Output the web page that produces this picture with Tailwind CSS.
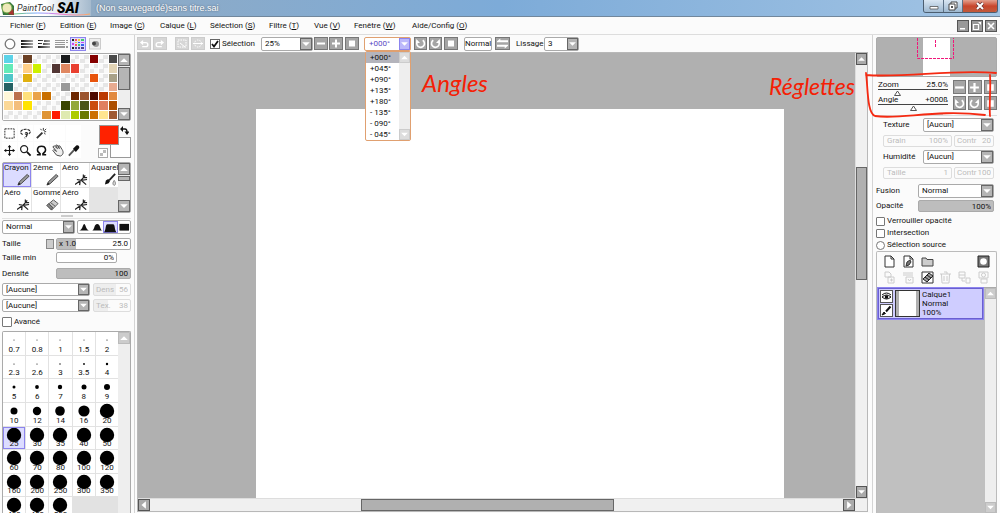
<!DOCTYPE html>
<html lang="fr">
<head>
<meta charset="utf-8">
<title>PaintTool SAI</title>
<script src="https://cdn.jsdelivr.net/npm/@tailwindcss/browser@4"></script>
</head>
<body class="h-screen overflow-hidden flex flex-col bg-[#fbfbfb] text-[#111] text-[8px] leading-[10px] font-['Roboto','Liberation_Sans',sans-serif]">
<svg class="hidden">
  <symbol id="up" viewBox="0 0 8 8"><path d="M1 5.500h6L4 2.500z" fill="#fff"/></symbol>
  <symbol id="down" viewBox="0 0 8 8"><path d="M1 2.500h6L4 5.500z" fill="#fff"/></symbol>
  <symbol id="left" viewBox="0 0 8 8"><path d="M5.500 1v6L2 4z" fill="#fff"/></symbol>
  <symbol id="right" viewBox="0 0 8 8"><path d="M2.500 1v6L6 4z" fill="#fff"/></symbol>
  <symbol id="minus" viewBox="0 0 10 10"><path d="M1 4h8v2H1z" fill="#fff"/></symbol>
  <symbol id="plus" viewBox="0 0 10 10"><path d="M1 4h3V1h2v3h3v2H6v3H4V6H1z" fill="#fff"/></symbol>
  <symbol id="square" viewBox="0 0 10 10"><path d="M2 2h6v6H2z" fill="#fff"/></symbol>
  <symbol id="ccw" viewBox="0 0 10 10"><path d="M2.600 2.600A3.500 3.500 0 1 0 7 2.100" fill="none" stroke="#fff" stroke-width="1.500"/><path d="M1 1v3.600h3.600z" fill="#fff"/></symbol>
  <symbol id="cw" viewBox="0 0 10 10"><path d="M7.400 2.600A3.500 3.500 0 1 1 3 2.100" fill="none" stroke="#fff" stroke-width="1.500"/><path d="M9 1v3.600H5.400z" fill="#fff"/></symbol>
  <symbol id="swap" viewBox="0 0 10 10"><path d="M0 3l3-2.500V2h7v1.800H0zM10 7L7 9.500V8H0V6.200h10z" fill="#fff"/></symbol>
  <symbol id="undo" viewBox="0 0 10 10"><path d="M3 4h4a2 2 0 0 1 0 4.500H3" fill="none" stroke="#fff" stroke-width="1.500"/><path d="M.5 4L4 1v6z" fill="#fff"/></symbol>
  <symbol id="redo" viewBox="0 0 10 10"><path d="M7 4H3a2 2 0 0 0 0 4.500H7" fill="none" stroke="#fff" stroke-width="1.500"/><path d="M9.500 4L6 1v6z" fill="#fff"/></symbol>
  <symbol id="pencil" viewBox="0 0 14 14"><path d="M1 13l1.500-3.500L11 1.500l2 2L4.500 11.500z" fill="#999" stroke="#444"/><path d="M1 13l3-1-1.800-1.800z" fill="#222"/></symbol>
  <symbol id="air" viewBox="0 0 14 14"><path d="M0 12.500l6-4.500M2 7l4.500 1L11 2.500M6.500 8L13 7M7 8l5 4.500M5.500 9L5 13M9 5V1.500M9 5h4" fill="none" stroke="#222" stroke-width="1.300"/></symbol>
  <symbol id="brush" viewBox="0 0 14 14"><path d="M1 12.500l1-4.500 2.500-1.500 2 2-1.500 2.500z" fill="#111"/><path d="M5.500 8L12 1" stroke="#222" stroke-width="2"/><path d="M11 8c3 4 0 5.500 0 5.500s-3-1.500 0-5.500z" fill="#ddd" stroke="#777"/></symbol>
  <symbol id="eraser" viewBox="0 0 14 14"><path d="M1 8l7-6 5 4-7 7z" fill="#ccc" stroke="#555"/><path d="M3 6.500l5 4.500M5 5l5 4M1 8l5 5 1-3-4-4z" fill="#888" stroke="#555"/></symbol>
</svg>

<header class="h-[17px] shrink-0 flex items-stretch border-b border-[#71879c] bg-linear-to-r from-[#93aabf] via-[#7dabd8] to-[#a2c4e4]">
  <div class="w-[91px] flex items-center relative bg-linear-to-r from-white via-white to-[#a5bacd]">
    <svg class="w-[15px] h-[15px] shrink-0" viewBox="0 0 15 15"><path d="M1 3l9-2 4 4v9H3z" fill="#35763b"/><circle cx="7" cy="7" r="5" fill="#eee9b9" stroke="#71a543"/><path d="M8 13l5-5 1 6z" fill="#a8322f"/></svg>
    <span class="text-[9px] italic ml-[2px] text-[#333] whitespace-nowrap">PaintTool</span>
    <span class="text-[14px] leading-[14px] font-black italic ml-[3px] text-black">SAI</span>
    <svg class="absolute left-[14px] bottom-0 w-[76px] h-[5px]" viewBox="0 0 76 5"><defs><linearGradient id="rainbow"><stop stop-color="#6dc86d"/><stop offset=".3" stop-color="#79a5ff"/><stop offset=".6" stop-color="#ec72dc"/><stop offset="1" stop-color="#ffac62"/></linearGradient></defs><path d="M0 3Q25 1 45 3T76 3" fill="none" stroke="url(#rainbow)"/></svg>
  </div>
  <h1 class="text-[9px] leading-[17px] ml-[5px] text-white flex-1 font-['Liberation_Sans',sans-serif] [text-shadow:0_0_2px_#456]">(Non sauvegardé)sans titre.sai</h1>
  <div class="flex h-[13px] mr-[2px] border border-t-0 border-[#4c5e70] rounded-b-[3px] overflow-hidden">
    <button aria-label="Réduire" class="w-[20px] bg-linear-to-b from-[#d9e6f2] to-[#9db8d0] border-r border-[#5c7186] flex justify-center items-center"><svg class="w-[10px] h-[10px]" viewBox="0 0 10 10"><path d="M1 5.500h8v2.500H1z" fill="#fff" stroke="#555" stroke-width=".8"/></svg></button>
    <button aria-label="Restaurer" class="w-[19px] bg-linear-to-b from-[#d9e6f2] to-[#9db8d0] border-r border-[#5c7186] flex justify-center items-center"><svg class="w-[10px] h-[10px]" viewBox="0 0 10 10"><path d="M3 1h6v6H3z" fill="#fff" stroke="#444"/><path d="M1 3h6v6H1z" fill="#fff" stroke="#444"/><path d="M3 5h2v2H3z" fill="#555"/></svg></button>
    <button aria-label="Fermer" class="w-[34px] bg-linear-to-b from-[#e2a08f] via-[#c8452c] to-[#c25a3c] flex justify-center items-center"><svg class="w-[10px] h-[10px]" viewBox="0 0 10 10"><path d="M2 2l6 6M8 2l-6 6" stroke="#633" stroke-width="3.200"/><path d="M2 2l6 6M8 2l-6 6" stroke="#fff" stroke-width="2"/></svg></button>
  </div>
</header>

<nav class="h-[18px] shrink-0 flex items-center pl-[10px] pr-[3px] border-b border-[#ddd] whitespace-nowrap">
  <a href="#" class="w-[50px]">Fichier (<u>F</u>)</a><a href="#" class="w-[50px]">Edition (<u>E</u>)</a><a href="#" class="w-[50px]">Image (<u>C</u>)</a><a href="#" class="w-[50px]">Calque (<u>L</u>)</a><a href="#" class="w-[59px]">Sélection (<u>S</u>)</a><a href="#" class="w-[45px]">Filtre (<u>T</u>)</a><a href="#" class="w-[40px]">Vue (<u>V</u>)</a><a href="#" class="w-[58px]">Fenêtre (<u>W</u>)</a><a href="#">Aide/Config (<u>O</u>)</a>
  <span class="flex-1"></span>
  <div class="flex gap-[2px]">
    <button aria-label="Réduire le document" class="w-[12px] h-[12px] border border-[#555] bg-[#999]"><svg viewBox="0 0 10 10"><path d="M2 7h5v1.500H2z" fill="#fff"/></svg></button>
    <button aria-label="Agrandir le document" class="w-[12px] h-[12px] border border-[#555] bg-[#999]"><svg viewBox="0 0 10 10"><path d="M1.500 3.500h5v5h-5z" fill="none" stroke="#fff" stroke-width="1.200"/><path d="M6 1h3v3z" fill="#fff"/></svg></button>
    <button aria-label="Fermer le document" class="w-[12px] h-[12px] border border-[#555] bg-[#999]"><svg viewBox="0 0 10 10"><path d="M2 2l6 6M8 2l-6 6" stroke="#fff" stroke-width="1.600"/></svg></button>
  </div>
</nav>

<div class="flex-1 min-h-0 flex">
  <!-- Left panels -->
  <aside class="w-[135px] shrink-0 pl-[2px] pr-[3px] border-r border-[#d4d4d4] flex flex-col">
    <div class="h-[18px] shrink-0 flex items-center gap-[1px]">
      <button aria-label="Roue" class="w-[16px] h-[14px] flex items-center justify-center"><svg class="w-[12px] h-[12px]" viewBox="0 0 12 12"><circle cx="6" cy="6" r="4.800" fill="#fff" stroke="#777" stroke-width="1.300"/></svg></button>
      <button aria-label="RVB" class="w-[16px] h-[14px] flex items-center justify-center"><svg class="w-[12px] h-[12px]" viewBox="0 0 12 12"><defs><linearGradient id="g"><stop stop-color="#111"/><stop offset="1" stop-color="#aaa"/></linearGradient></defs><path d="M0 2h12v2H0zM0 5h12v2H0zM0 8h12v2H0z" fill="url(#g)"/></svg></button>
      <button aria-label="TSV" class="w-[16px] h-[14px] flex items-center justify-center"><svg class="w-[12px] h-[12px]" viewBox="0 0 12 12"><path d="M0 2h5v1H0zM6 2h6v2H6zM0 5h4v1H0zM5 5h7v2H5zM0 8h12v2H0z" fill="url(#g)"/></svg></button>
      <button aria-label="Intermédiaires" class="w-[16px] h-[14px] flex items-center justify-center"><svg class="w-[13px] h-[12px]" viewBox="0 0 13 12"><path d="M0 2h10v1H0zM11 2h2v1h-2zM0 4h10v1H0zM11 4h2v1h-2zM0 6h10v1H0zM0 8h10v2H0zM11 8h2v2h-2z" fill="#999"/></svg></button>
      <button aria-label="Nuancier" class="w-[16px] h-[14px] border border-[#8c84ee] bg-[#dcdcff] flex items-center justify-center"><svg class="w-[12px] h-[12px]" viewBox="0 0 12 12"><path d="M0 1h2v2H0zM0 9h2v2H0z" fill="#222"/><path d="M3 1h2v2H3zM3 6h2v2H3z" fill="#f55"/><path d="M6 1h2v2H6zM3 4h2v1H3z" fill="#ec3"/><path d="M9 1h3v2H9zM6 6h2v2H6z" fill="#4c6"/><path d="M6 4h2v1H6zM9 6h3v2H9z" fill="#36e"/><path d="M9 4h3v1H9zM0 5h2v2H0z" fill="#c4e"/><path d="M3 9h2v2H3zM6 9h2v2H6zM9 9h3v2H9z" fill="#548"/></svg></button>
      <button aria-label="Bloc-notes" class="w-[16px] h-[14px] flex items-center justify-center"><svg class="w-[12px] h-[12px]" viewBox="0 0 12 12"><rect x=".5" y=".5" width="11" height="10.500" fill="#eee" stroke="#ccc"/><circle cx="7" cy="6" r="3" fill="#999"/><circle cx="5" cy="5.500" r="2" fill="#444"/></svg></button>
    </div>
    <div class="h-[68px] shrink-0 flex border border-[#aaa] rounded-[2px]">
      <div id="palette" class="flex-1 grid grid-cols-12 grid-rows-7 gap-px p-px bg-white"></div>
      <div class="w-[12px] bg-[#eee] flex flex-col">
        <button aria-label="Haut" class="h-[12px] border border-[#666] bg-[#b5b5b5]"><svg class="w-[10px] h-[10px]"><use href="#up"/></svg></button>
        <span class="h-[23px] mt-px border border-[#666] bg-[#b5b5b5]"></span><span class="flex-1"></span>
        <button aria-label="Bas" class="h-[12px] border border-[#666] bg-[#b5b5b5]"><svg class="w-[10px] h-[10px]"><use href="#down"/></svg></button>
      </div>
    </div>
    <div class="h-[41px] shrink-0 flex justify-between pt-[4px]">
      <div class="grid grid-cols-5 gap-px h-[33px]">
        <button aria-label="Rectangle" class="w-[15px] h-[16px] bg-white p-px"><svg viewBox="0 0 14 14"><rect x="2" y="2" width="10" height="10" fill="none" stroke="#222" stroke-dasharray="2 1"/></svg></button>
        <button aria-label="Lasso" class="w-[15px] h-[16px] bg-white p-px"><svg viewBox="0 0 14 14"><path d="M4 8C-1 6 3 2 8 2.500s6 4.500 0 5.500c-2 0-2-2 0-2s1 4-2 6" fill="none" stroke="#222" stroke-width="1.200" stroke-dasharray="3 1"/></svg></button>
        <button aria-label="Baguette magique" class="w-[15px] h-[16px] bg-white p-px"><svg viewBox="0 0 14 14"><path d="M2 12l6-6" stroke="#333" stroke-width="2"/><path d="M9 1v3M12 5h-2M6 2l1 1.500M12 2l-2 2M11 8l-1-2" stroke="#333"/></svg></button>
        <span class="bg-white"></span><span class="bg-white"></span>
        <button aria-label="Déplacer" class="w-[15px] h-[16px] bg-white p-px"><svg viewBox="0 0 14 14"><path d="M7 2v10M2 7h10" stroke="#111" stroke-width="1.200"/><path d="M7 1L5 3.500h4zM7 13l-2-2.500h4zM1 7l2.500-2v4zM13 7l-2.500-2v4z" fill="#111"/></svg></button>
        <button aria-label="Zoom" class="w-[15px] h-[16px] bg-white p-px"><svg viewBox="0 0 14 14"><circle cx="5.500" cy="5.500" r="3.800" fill="none" stroke="#222" stroke-width="1.300"/><path d="M8.500 8.500l4 4" stroke="#111" stroke-width="2"/></svg></button>
        <button aria-label="Rotation" class="w-[15px] h-[16px] bg-white p-px"><svg viewBox="0 0 14 14"><path d="M2 11.500h3.500v-1C1 8 2 2.500 7 2.500s6 5.500 1.500 8v1H12" fill="none" stroke="#111" stroke-width="1.600"/></svg></button>
        <button aria-label="Main" class="w-[15px] h-[16px] bg-white p-px"><svg viewBox="0 0 14 14"><path d="M6 12L2 7l1-1 3 2-4-5 1.500-1L7 5 5 1.500 6.500 1 9 5l-1-3h1.500L12 6c2 3 1 6-2 7z" fill="#eee" stroke="#444"/></svg></button>
        <button aria-label="Pipette" class="w-[15px] h-[16px] bg-white p-px"><svg viewBox="0 0 14 14"><path d="M2 12.500L8 6" stroke="#555" stroke-width="2"/><path d="M6.500 5l3 3.500 1-1 2.500-3c1-2-1-4-3-3L7.500 4z" fill="#111"/></svg></button>
      </div>
      <div class="w-[33px] h-[33px] relative">
        <button aria-label="Couleur secondaire" class="absolute right-0 bottom-0 w-[21px] h-[21px] bg-white border border-[#999]"></button>
        <button aria-label="Couleur principale" class="absolute left-[1px] top-0 w-[20px] h-[20px] bg-[#ff2200] border border-[#999]"></button>
        <button aria-label="Transparence" class="absolute left-0 bottom-0 w-[10px] h-[10px] border border-[#aaa] bg-white"><svg viewBox="0 0 8 8"><path d="M1 4h3V1h3v3H4v3H1z" fill="#bbb"/></svg></button>
        <button aria-label="Échanger" class="absolute right-[2px] top-0 w-[9px] h-[10px]"><svg viewBox="0 0 9 9"><path d="M2 3h3q2 0 2 3" fill="none" stroke="#111" stroke-width="1.300"/><path d="M0 3l3-3v6zM7 9L4.500 5.500h5z" fill="#111"/></svg></button>
      </div>
    </div>
    <div class="h-[51px] shrink-0 flex border border-[#aaa] rounded-[2px]">
      <div id="tools" class="flex-1 grid grid-cols-4 grid-rows-2 gap-px bg-[#e4e4e4]"></div>
      <div class="w-[12px] bg-[#eee] flex flex-col">
        <button aria-label="Haut" class="h-[12px] border border-[#666] bg-[#b5b5b5]"><svg class="w-[10px] h-[10px]"><use href="#up"/></svg></button>
        <span class="h-[5px] mt-px border border-[#666] bg-[#b5b5b5]"></span><span class="flex-1"></span>
        <button aria-label="Bas" class="h-[12px] border border-[#666] bg-[#b5b5b5]"><svg class="w-[10px] h-[10px]"><use href="#down"/></svg></button>
      </div>
    </div>
    <div class="h-[6px] shrink-0 flex justify-center items-center border-b border-[#e2e2e2]"><span class="w-[12px] h-[2px] bg-[#ccc]"></span></div>
    <div class="h-[14px] mt-px shrink-0 flex justify-between">
      <div class="w-[73px] flex border border-[#aaa] rounded-[2px] bg-white"><select aria-label="Mode" class="appearance-none flex-1 min-w-0 pl-[3px]"><option>Normal</option></select><span class="w-[11px] border border-[#666] bg-[#b5b5b5]"><svg class="w-[9px] h-[10px]"><use href="#down"/></svg></span></div>
      <div class="w-[54px] flex border border-[#aaa] rounded-[2px] bg-white">
        <button aria-label="Pointe fine" class="flex-1"><svg viewBox="0 0 13 12"><path d="M1 10c4-1 4-7 5.500-7S8 9 12 10z" fill="#111"/></svg></button>
        <button aria-label="Pointe ronde" class="flex-1"><svg viewBox="0 0 13 12"><path d="M1 10c3-1 2-7 5.500-7S9 9 12 10z" fill="#111"/></svg></button>
        <button aria-label="Pointe large" class="flex-1 border border-[#8c84ee] bg-[#dcdcff]"><svg viewBox="0 0 11 10"><path d="M0 9c2-2 1-7 3-7h5c2 0 1 5 3 7z" fill="#111"/></svg></button>
        <button aria-label="Pointe carrée" class="flex-1"><svg viewBox="0 0 13 12"><path d="M1.500 3h10v7h-10z" fill="#111"/></svg></button>
      </div>
    </div>
    <div class="h-[14px] mt-[3px] shrink-0 flex items-center">
      <label for="size" class="w-[44px] shrink-0">Taille</label><button aria-label="Échelle" class="w-[8px] h-[10px] mr-[2px] shrink-0 border border-[#888] bg-[#ccc]"></button>
      <div class="flex-1 min-w-0 h-[12px] flex items-center border border-[#aaa] rounded-[2px] bg-white"><span class="bg-[#bdbdbd] w-[19px] shrink-0 h-full pl-[2px] whitespace-nowrap">x 1.0</span><input id="size" value="25.0" class="flex-1 min-w-0 text-right pr-[2px]"></div>
    </div>
    <div class="h-[13px] shrink-0 flex items-center">
      <label for="min" class="w-[54px]">Taille min</label><input id="min" value="0%" class="w-[61px] h-[11px] border border-[#aaa] rounded-[2px] bg-white text-right pr-[2px]">
    </div>
    <div class="h-[13px] mt-[3px] shrink-0 flex items-center">
      <label for="density" class="w-[54px]">Densité</label><input id="density" value="100" class="flex-1 min-w-0 h-[11px] border border-[#aaa] rounded-[2px] bg-[#bdbdbd] text-right pr-[2px]">
    </div>
    <div class="h-[13px] mt-[3px] shrink-0 flex gap-[3px]">
      <div class="w-[88px] flex border border-[#aaa] rounded-[2px] bg-white"><select aria-label="Forme" class="appearance-none flex-1 min-w-0 pl-[3px]"><option>[Aucune]</option></select><span class="w-[11px] border border-[#666] bg-[#b5b5b5]"><svg class="w-[9px] h-[9px]"><use href="#down"/></svg></span></div>
      <label class="flex-1 min-w-0 flex items-center border border-[#ddd] rounded-[2px] text-[#bbb] px-[2px] bg-linear-to-r from-[#eee] from-60% to-[#fbfbfb] to-60%">Dens<input disabled value="56" class="flex-1 min-w-0 text-right"></label>
    </div>
    <div class="h-[13px] mt-[3px] shrink-0 flex gap-[3px]">
      <div class="w-[88px] flex border border-[#aaa] rounded-[2px] bg-white"><select aria-label="Texture du pinceau" class="appearance-none flex-1 min-w-0 pl-[3px]"><option>[Aucune]</option></select><span class="w-[11px] border border-[#666] bg-[#b5b5b5]"><svg class="w-[9px] h-[9px]"><use href="#down"/></svg></span></div>
      <label class="flex-1 min-w-0 flex items-center border border-[#ddd] rounded-[2px] text-[#bbb] px-[2px] bg-linear-to-r from-[#eee] from-40% to-[#fbfbfb] to-40%">Tex.<input disabled value="38" class="flex-1 min-w-0 text-right"></label>
    </div>
    <label class="h-[12px] mt-[4px] shrink-0 flex items-center gap-[2px]"><input type="checkbox" class="appearance-none w-[10px] h-[10px] border border-[#777] rounded-[1px] bg-white">Avancé</label>
    <div class="flex-1 min-h-0 mt-[3px] flex border border-b-0 border-[#aaa] rounded-t-[2px] overflow-hidden">
      <div class="flex-1"><div id="brushes" class="grid grid-cols-5 grid-rows-8 h-[188px] gap-px bg-[#e2e2e2]"></div></div>
      <div class="w-[12px] bg-[#eee]"><button aria-label="Haut" class="w-[12px] h-[12px] border border-[#bbb] bg-[#ccc]"><svg class="w-[10px] h-[10px]"><use href="#up"/></svg></button></div>
    </div>
  </aside>

  <!-- Workspace -->
  <main class="flex-1 min-w-0 flex flex-col pl-[2px] pr-[4px] relative">
    <div class="h-[17px] shrink-0 flex items-center whitespace-nowrap">
      <button aria-label="Annuler" class="w-[14px] h-[13px] border border-[#ccc] bg-[#d6d6d6] p-px mr-[2px]"><svg class="w-[10px] h-[9px]"><use href="#undo"/></svg></button>
      <button aria-label="Rétablir" class="w-[14px] h-[13px] border border-[#ccc] bg-[#d6d6d6] p-px mr-[8px]"><svg class="w-[10px] h-[9px]"><use href="#redo"/></svg></button>
      <button aria-label="Désélectionner" class="w-[14px] h-[13px] border border-[#ccc] bg-[#d6d6d6] p-px mr-[2px]"><svg viewBox="0 0 10 9"><rect x="1" y="1" width="8" height="7" fill="none" stroke="#fff" stroke-dasharray="1.500 1"/><path d="M3 4l5 4" stroke="#fff"/></svg></button>
      <button aria-label="Inverser" class="w-[14px] h-[13px] border border-[#ccc] bg-[#d6d6d6] p-px mr-[5px]"><svg viewBox="0 0 10 9"><circle cx="5" cy="4.500" r="3.500" fill="none" stroke="#fff" stroke-dasharray="1.500 1"/><path d="M0 4.500h10" stroke="#fff"/></svg></button>
      <label class="w-[51px] flex items-center gap-[2px] relative"><input type="checkbox" checked class="appearance-none w-[10px] h-[10px] border border-[#666] bg-white"><svg class="absolute left-[1px] w-[8px] h-[8px]" viewBox="0 0 8 8"><path d="M1 4l2 2.500L7 1" fill="none" stroke="#111" stroke-width="1.800"/></svg>Sélection</label>
      <div class="w-[52px] h-[14px] mr-px flex border border-[#aaa] rounded-[2px] bg-white"><select aria-label="Zoom" class="appearance-none flex-1 min-w-0 pl-[3px]"><option>25%</option></select><span class="w-[12px] border border-[#666] bg-[#b5b5b5]"><svg class="w-[10px] h-[10px]"><use href="#down"/></svg></span></div>
      <button aria-label="Zoom arrière" class="w-[14px] h-[13px] border border-[#777] bg-[#a5a5a5] px-px mr-px"><svg class="w-[10px] h-[11px]"><use href="#minus"/></svg></button>
      <button aria-label="Zoom avant" class="w-[14px] h-[13px] border border-[#777] bg-[#a5a5a5] px-px mr-[2px]"><svg class="w-[10px] h-[11px]"><use href="#plus"/></svg></button>
      <button aria-label="Zoom normal" class="w-[14px] h-[13px] border border-[#777] bg-[#a5a5a5] px-px mr-[5px]"><svg class="w-[10px] h-[11px]"><use href="#square"/></svg></button>
      <div class="w-[47px] h-[14px] mr-[3px] relative flex border border-[#e0a070] rounded-[2px] bg-white text-[#5b4bc4]"><select aria-label="Angle" class="appearance-none flex-1 min-w-0 pl-[4px]"><option>+000°</option></select><span class="w-[11px] border border-[#8c84ee] bg-[#bcb8fa]"><svg class="w-[9px] h-[10px]"><use href="#down"/></svg></span>
        <div class="absolute left-0 top-[13px] w-[46px] z-10 flex bg-white border border-[#e0a070] rounded-[2px] text-[#111]">
          <ul role="listbox" aria-label="Angles" class="flex-1 leading-[11px]">
            <li role="option" aria-selected="true" class="pl-[4px] bg-[#b4b4bc]">+000°</li><li role="option" class="pl-[4px]">+045°</li><li role="option" class="pl-[4px]">+090°</li><li role="option" class="pl-[4px]">+135°</li><li role="option" class="pl-[4px]">+180°</li><li role="option" class="pl-[4px]">- 135°</li><li role="option" class="pl-[4px]">- 090°</li><li role="option" class="pl-[4px]">- 045°</li>
          </ul>
          <div class="w-[11px] bg-[#eee] flex flex-col justify-between"><button aria-label="Haut" class="h-[11px] border border-[#ccc] bg-[#ddd]"><svg class="w-[9px] h-[9px]"><use href="#up"/></svg></button><button aria-label="Bas" class="h-[11px] border border-[#ccc] bg-[#ddd]"><svg class="w-[9px] h-[9px]"><use href="#down"/></svg></button></div>
        </div>
      </div>
      <button aria-label="Rotation gauche" class="w-[13px] h-[13px] border border-[#777] bg-[#a5a5a5] mr-[2px]"><svg class="w-[11px] h-[11px]"><use href="#ccw"/></svg></button>
      <button aria-label="Rotation droite" class="w-[13px] h-[13px] border border-[#777] bg-[#a5a5a5] mr-[2px]"><svg class="w-[11px] h-[11px]"><use href="#cw"/></svg></button>
      <button aria-label="Angle nul" class="w-[14px] h-[13px] border border-[#777] bg-[#a5a5a5] px-px mr-[6px]"><svg class="w-[10px] h-[11px]"><use href="#square"/></svg></button>
      <button class="w-[28px] h-[14px] border border-[#aaa] rounded-[2px] bg-white mr-[3px]">Normal</button>
      <button aria-label="Miroir" class="w-[15px] h-[13px] border border-[#777] bg-[#a5a5a5] px-px mr-[6px]"><svg class="w-[11px] h-[11px]"><use href="#swap"/></svg></button>
      <label for="smooth" class="w-[28px]">Lissage</label>
      <div class="w-[35px] h-[14px] flex border border-[#aaa] rounded-[2px] bg-white"><select id="smooth" class="appearance-none flex-1 min-w-0 pl-[3px]"><option>3</option></select><span class="w-[11px] border border-[#666] bg-[#b5b5b5]"><svg class="w-[9px] h-[10px]"><use href="#down"/></svg></span></div>
    </div>
    <div class="flex-1 min-h-0 flex flex-col border border-[#b8b8b8] bg-[#f0f0f0] mb-px">
      <div class="flex-1 min-h-0 flex">
        <div class="flex-1 bg-[#b0b0b0] pl-[118px] pr-[71px] pt-[56px] flex"><div class="flex-1 bg-white"></div></div>
        <div class="w-[12px] border-l border-[#ddd] flex flex-col">
          <button aria-label="Haut" class="h-[12px] border border-[#555] bg-[#aaa]"><svg class="w-[9px] h-[10px]"><use href="#up"/></svg></button>
          <span class="flex-[102]"></span><span class="flex-[112] border border-[#666] bg-[#b0b0b0]"></span><span class="flex-[207]"></span>
          <button aria-label="Bas" class="h-[12px] border border-[#555] bg-[#aaa]"><svg class="w-[9px] h-[10px]"><use href="#down"/></svg></button>
        </div>
      </div>
      <div class="h-[13px] border-t border-[#ddd] flex pr-[12px]">
        <button aria-label="Gauche" class="w-[12px] border border-[#555] bg-[#aaa]"><svg class="w-[10px] h-[10px]"><use href="#left"/></svg></button>
        <span class="flex-[212]"></span><span class="flex-[251] border border-[#666] bg-[#b0b0b0]"></span><span class="flex-[230]"></span>
        <button aria-label="Droite" class="w-[12px] border border-[#555] bg-[#aaa]"><svg class="w-[10px] h-[10px]"><use href="#right"/></svg></button>
      </div>
    </div>
    <p class="absolute left-[287px] top-[35px] text-[24px] leading-[26px] italic text-[#f52005] font-['Lato',sans-serif]">Angles</p>
    <p class="absolute right-[17px] top-[37px] text-[23px] leading-[28px] italic text-[#f52005] font-['Lato',sans-serif]">Réglettes</p>
  </main>

  <!-- Right panels -->
  <aside class="w-[128px] shrink-0 border-l border-[#d4d4d4] pl-[3px] pr-[3px] pt-[2px] flex flex-col relative">
    <div class="h-[40px] shrink-0 border border-[#aaa] rounded-[2px] bg-[#b0b0b0] relative flex justify-center">
      <div class="w-[27px] bg-white"></div>
      <svg class="absolute left-[40px] top-0 w-[38px] h-[22px]" viewBox="0 0 38 22"><path d="M.5 0v20.500h36V0M18.500 2v7" fill="none" stroke="#f0187a" stroke-dasharray="3 1"/></svg>
    </div>
    <div class="h-[33px] mt-[3px] shrink-0 flex gap-[5px] pl-[2px]">
      <div class="w-[70px]">
        <div class="relative h-[15px]"><div class="flex justify-between leading-[9px] border-b border-[#444]"><label for="zoomr">Zoom</label><output>25.0%</output></div><svg class="w-[70px] h-[6px]" viewBox="0 0 70 6"><path d="M16.500 5.500l3-4.500 3 4.500z" fill="#fff" stroke="#555"/></svg><input id="zoomr" type="range" class="absolute inset-x-0 bottom-0 w-full h-[6px] opacity-0"></div>
        <div class="relative h-[15px]"><div class="flex justify-between leading-[9px] border-b border-[#444]"><label for="angler">Angle</label><output>+000ß</output></div><svg class="w-[70px] h-[6px]" viewBox="0 0 70 6"><path d="M32.500 5.500l3-4.500 3 4.500z" fill="#fff" stroke="#555"/></svg><input id="angler" type="range" class="absolute inset-x-0 bottom-0 w-full h-[6px] opacity-0"></div>
      </div>
      <div class="grid grid-cols-3 gap-[2px] flex-1 h-[30px]">
        <button aria-label="Zoom arrière" class="border border-[#777] bg-[#a5a5a5]"><svg class="w-[11px] h-[11px]"><use href="#minus"/></svg></button>
        <button aria-label="Zoom avant" class="border border-[#777] bg-[#a5a5a5]"><svg class="w-[11px] h-[11px]"><use href="#plus"/></svg></button>
        <button aria-label="Zoom normal" class="border border-[#777] bg-[#a5a5a5]"><svg class="w-[11px] h-[11px]"><use href="#square"/></svg></button>
        <button aria-label="Rotation gauche" class="border border-[#777] bg-[#a5a5a5]"><svg class="w-[11px] h-[11px]"><use href="#ccw"/></svg></button>
        <button aria-label="Rotation droite" class="border border-[#777] bg-[#a5a5a5]"><svg class="w-[11px] h-[11px]"><use href="#cw"/></svg></button>
        <button aria-label="Angle nul" class="border border-[#777] bg-[#a5a5a5]"><svg class="w-[11px] h-[11px]"><use href="#square"/></svg></button>
      </div>
    </div>
    <div class="h-[3px] shrink-0 flex justify-center border-b border-[#ddd]"><span class="w-[12px] h-[2px] bg-[#ccc]"></span></div>
    <div class="mt-[2px] pl-[7px] pr-[3px] shrink-0 flex flex-col gap-[2px]">
      <div class="h-[14px] flex items-center"><label for="tex" class="w-[40px]">Texture</label><div class="flex-1 h-[14px] flex border border-[#aaa] rounded-[2px] bg-white"><select id="tex" class="appearance-none flex-1 min-w-0 pl-[3px]"><option>[Aucun]</option></select><span class="w-[12px] border border-[#666] bg-[#b5b5b5]"><svg class="w-[10px] h-[10px]"><use href="#down"/></svg></span></div></div>
      <div class="h-[14px] flex gap-[2px] text-[#bbb] py-px"><label class="w-[69px] shrink-0 flex items-center border border-[#ddd] rounded-[2px] px-[3px]">Grain<input disabled value="100%" class="flex-1 min-w-0 text-right"></label><label class="flex-1 min-w-0 flex items-center border border-[#ddd] rounded-[2px] px-[2px]">Contr<input disabled value="20" class="flex-1 min-w-0 text-right"></label></div>
      <div class="h-[14px] flex items-center"><label for="hum" class="w-[40px]">Humidité</label><div class="flex-1 h-[14px] flex border border-[#aaa] rounded-[2px] bg-white"><select id="hum" class="appearance-none flex-1 min-w-0 pl-[3px]"><option>[Aucun]</option></select><span class="w-[12px] border border-[#666] bg-[#b5b5b5]"><svg class="w-[10px] h-[10px]"><use href="#down"/></svg></span></div></div>
      <div class="h-[14px] flex gap-[2px] text-[#bbb] py-px"><label class="w-[69px] shrink-0 flex items-center border border-[#ddd] rounded-[2px] px-[3px]">Taille<input disabled value="1" class="flex-1 min-w-0 text-right"></label><label class="flex-1 min-w-0 flex items-center border border-[#ddd] rounded-[2px] px-[2px]">Contr<input disabled value="100" class="flex-1 min-w-0 text-right"></label></div>
    </div>
    <div class="mt-[4px] pr-[3px] shrink-0 flex flex-col gap-[1px]">
      <div class="h-[14px] flex items-center"><label for="blend" class="w-[42px]">Fusion</label><div class="flex-1 h-[14px] flex border border-[#aaa] rounded-[2px] bg-white"><select id="blend" class="appearance-none flex-1 min-w-0 pl-[3px]"><option>Normal</option></select><span class="w-[12px] border border-[#666] bg-[#b5b5b5]"><svg class="w-[10px] h-[10px]"><use href="#down"/></svg></span></div></div>
      <div class="h-[14px] flex items-center"><label for="opa" class="w-[42px]">Opacité</label><input id="opa" value="100%" class="flex-1 min-w-0 h-[12px] border border-[#aaa] rounded-[2px] bg-[#bdbdbd] text-right pr-[2px]"></div>
    </div>
    <div class="mt-[2px] shrink-0">
      <label class="h-[12px] flex items-center gap-[2px]"><input type="checkbox" class="appearance-none w-[9px] h-[9px] border border-[#777] rounded-[1px] bg-white">Verrouiller opacité</label>
      <label class="h-[12px] flex items-center gap-[2px]"><input type="checkbox" class="appearance-none w-[9px] h-[9px] border border-[#777] rounded-[1px] bg-white">Intersection</label>
      <label class="h-[12px] flex items-center gap-[2px]"><input type="radio" class="appearance-none w-[9px] h-[9px] border border-[#777] rounded-full bg-white">Sélection source</label>
    </div>
    <div class="flex-1 min-h-0 flex flex-col border border-b-0 border-[#bbb] rounded-t-[2px]">
      <div id="layerbar" class="h-[35px] shrink-0 grid grid-cols-6 grid-rows-2 px-[3px] py-px justify-items-center items-center"></div>
      <div class="flex-1 min-h-0 flex border-t border-[#aaa]">
        <div class="flex-1 bg-[#c0c0c0]">
          <div class="h-[31px] mx-px mr-[2px] flex gap-[2px] p-px bg-[#cfcdff] border border-[#6a5fd0] outline outline-[#8c84ee]">
            <div class="w-[13px] flex flex-col gap-px">
              <button aria-label="Visible" class="flex-1 bg-white border border-[#555] flex"><svg class="w-[11px] h-[11px]" viewBox="0 0 11 11"><path d="M1 4q4.500-4 9 0M1 6q4.500-4 9 0-4.500 4-9 0z" fill="none" stroke="#111"/><circle cx="5.500" cy="6" r="1.800" fill="#111"/></svg></button>
              <button aria-label="Peindre" class="flex-1 bg-white border border-[#555] flex"><svg class="w-[11px] h-[11px]" viewBox="0 0 11 11"><path d="M1 10l2-3 1.500 1.500z" fill="#111" stroke="#111"/><path d="M5 6.500L9.500 1.500" stroke="#111" stroke-width="2"/></svg></button>
            </div>
            <div class="w-[25px] border border-[#333] bg-[#b0b0b0] px-[3px] flex"><div class="flex-1 bg-white"></div></div>
            <p class="leading-[9px]">Calque1<br>Normal<br>100%</p>
          </div>
        </div>
        <div class="w-[11px] bg-[#eee] flex flex-col justify-between"><button aria-label="Haut" class="h-[11px] border border-[#bbb] bg-[#ccc]"><svg class="w-[9px] h-[9px]"><use href="#up"/></svg></button><button aria-label="Bas" class="h-[11px] border border-[#bbb] bg-[#ccc]"><svg class="w-[9px] h-[9px]"><use href="#down"/></svg></button></div>
      </div>
    </div>
  </aside>
</div>

<!-- Hand-drawn frame around the sliders -->
<svg class="absolute right-0 top-[68px] w-[136px] h-[52px] pointer-events-none" viewBox="0 0 136 52"><path d="M2 5C4 20 3 45 11 48c25 4 60-7 110-1M2 7C40 10 90 1 132 5M126 7c1 15-1 28 0 41" fill="none" stroke="#f52a12" stroke-width="1.800" stroke-linecap="round"/></svg>

<script>
const swatches = [
 {0:'#5cd3e8',2:'#6b4024',6:'#1a1c1d',9:'#850000',11:'#4a4a4a'},
 {0:'#63eab8',2:'#ffcf87',3:'#cdf000',5:'#523634',6:'#e08862',7:'#e94030',11:'#e2d4b5'},
 {0:'#4fc6c9',2:'#e0b010',9:'#e8540c',11:'#a8a188'},
 {0:'#266164',6:'#999999',11:'#e8ab90'},
 {0:'#fff7d8',1:'#bb714d',2:'#ffe07b',3:'#eaa349',4:'#c96f00',7:'#6d2800',8:'#9c552f',9:'#4e0a00',10:'#bb3a02',11:'#e2893f'},
 {0:'#fbd898',1:'#f3be7c',2:'#ffe300',6:'#3c4700',7:'#93a838',8:'#4b5617',9:'#cb4d0c',10:'#e08060',11:'#ac4f00'},
 {4:'#df9435',5:'#ff1c00',6:'#dfeab0',7:'#accb00',8:'#697800',9:'#cc7000',10:'#ffe590',11:'#a05a32'}];
let h = '';
for (const row of swatches) for (let c = 0; c < 12; c++)
  h += row[c] ? `<span style="background:${row[c]}"></span>`
    : '<span class="bg-[conic-gradient(#e6e6e6_25%,#fafafa_0_50%,#e6e6e6_0_75%,#fafafa_0)]"></span>';
document.getElementById('palette').innerHTML = h;

const tools = [['Crayon','pencil'],['2ème','pencil'],['Aéro','air'],['Aquarelle','brush'],['Aéro','air'],['Gomme','eraser'],['Aéro','air'],null];
document.getElementById('tools').innerHTML = tools.map((t, i) => t
  ? `<button class="min-w-0 overflow-hidden flex flex-col text-left leading-[10px] pl-px ${i ? 'bg-white' : 'bg-[#dcdcff] outline outline-[#8c84ee] -outline-offset-1'}"><span>${t[0]}</span><svg class="w-[13px] h-[13px] ml-[13px]"><use href="#${t[1]}"/></svg></button>`
  : '<span></span>').join('');

const sizes = ['0.7','0.8','1','1.5','2','2.3','2.6','3','3.5','4','5','6','7','8','9','10','12','14','16','20','25','30','35','40','50','60','70','80','100','120','160','200','250','300','350','400','450','500'];
const radii = [.5,.5,.5,.5,.6,.6,.6,.7,.9,1.2,1.5,1.9,2.2,2.5,3,3.5,4.2,4.8,5.6];
document.getElementById('brushes').innerHTML = sizes.map((s, i) =>
  `<button class="min-w-0 min-h-0 overflow-hidden relative flex flex-col items-center ${i === 20 ? 'bg-[#dcdcff] outline outline-[#8c84ee] -outline-offset-1' : 'bg-white'}"><svg class="w-[16px] h-[16px] shrink-0" viewBox="0 0 16 16"><circle cx="8" cy="8" r="${radii[i] || 7.2}" fill="#000"/></svg><span class="absolute inset-x-0 bottom-px leading-[8px] text-center">${s}</span></button>`).join('');

const page = '<path d="M2 1h6l3 3v8H2zM8 1v3h3" fill="#fff" stroke="#333"/>';
const icons = [
 ['Nouveau calque', page],
 ['Calque vectoriel', page + '<path d="M4 11l1-4 3-2 1 2-2 3z" fill="#777" stroke="#333"/>'],
 ['Dossier', '<path d="M1 3h4l1 1.500h6V11H1z" fill="#ccc" stroke="#444"/>'], null, null,
 ['Masque', '<path d="M1 1h11v11H1z" fill="#777" stroke="#222"/><circle cx="6.500" cy="6.500" r="3.300" fill="#fff"/>'],
 ['Transférer', '<path d="M2 1h4l2 2v3H2zM5 6h6v6H5zM7 9h3M8.500 7.500v3" fill="none" stroke="#ccc"/>'],
 ['Fusionner', '<path d="M1 2h10M1 4h10M4 6h7v6H4zM6 8l1.500 2L9 8" fill="none" stroke="#ccc"/>'],
 ['Effacer', '<path d="M1 1h11v11H1z" fill="#fff" stroke="#333"/><path d="M2 8l6-6 4 3-6 6zM4 6l4 3M6 4l4 3" fill="#999" stroke="#222"/>'],
 ['Supprimer', '<path d="M1 3h11M5 1h3v2M2.500 3l.5 9h7l.5-9M5 5v5M8 5v5" fill="none" stroke="#ccc"/>'],
 ['Appliquer masque', '<path d="M1 1h6v6H1zM1 4h6M4 7v3h3M8 7h4v5H8z" fill="none" stroke="#ccc"/>'],
 ['Lier masque', '<path d="M2 1h9v6H2zM4 8h6v4H4z" fill="none" stroke="#ccc"/><circle cx="6.500" cy="4" r="2" fill="none" stroke="#ccc"/>']];
document.getElementById('layerbar').innerHTML = icons.map(i => i
  ? `<button aria-label="${i[0]}" class="w-[13px] h-[13px]"><svg viewBox="0 0 13 13">${i[1]}</svg></button>` : '<span></span>').join('');
</script>
</body>
</html>
